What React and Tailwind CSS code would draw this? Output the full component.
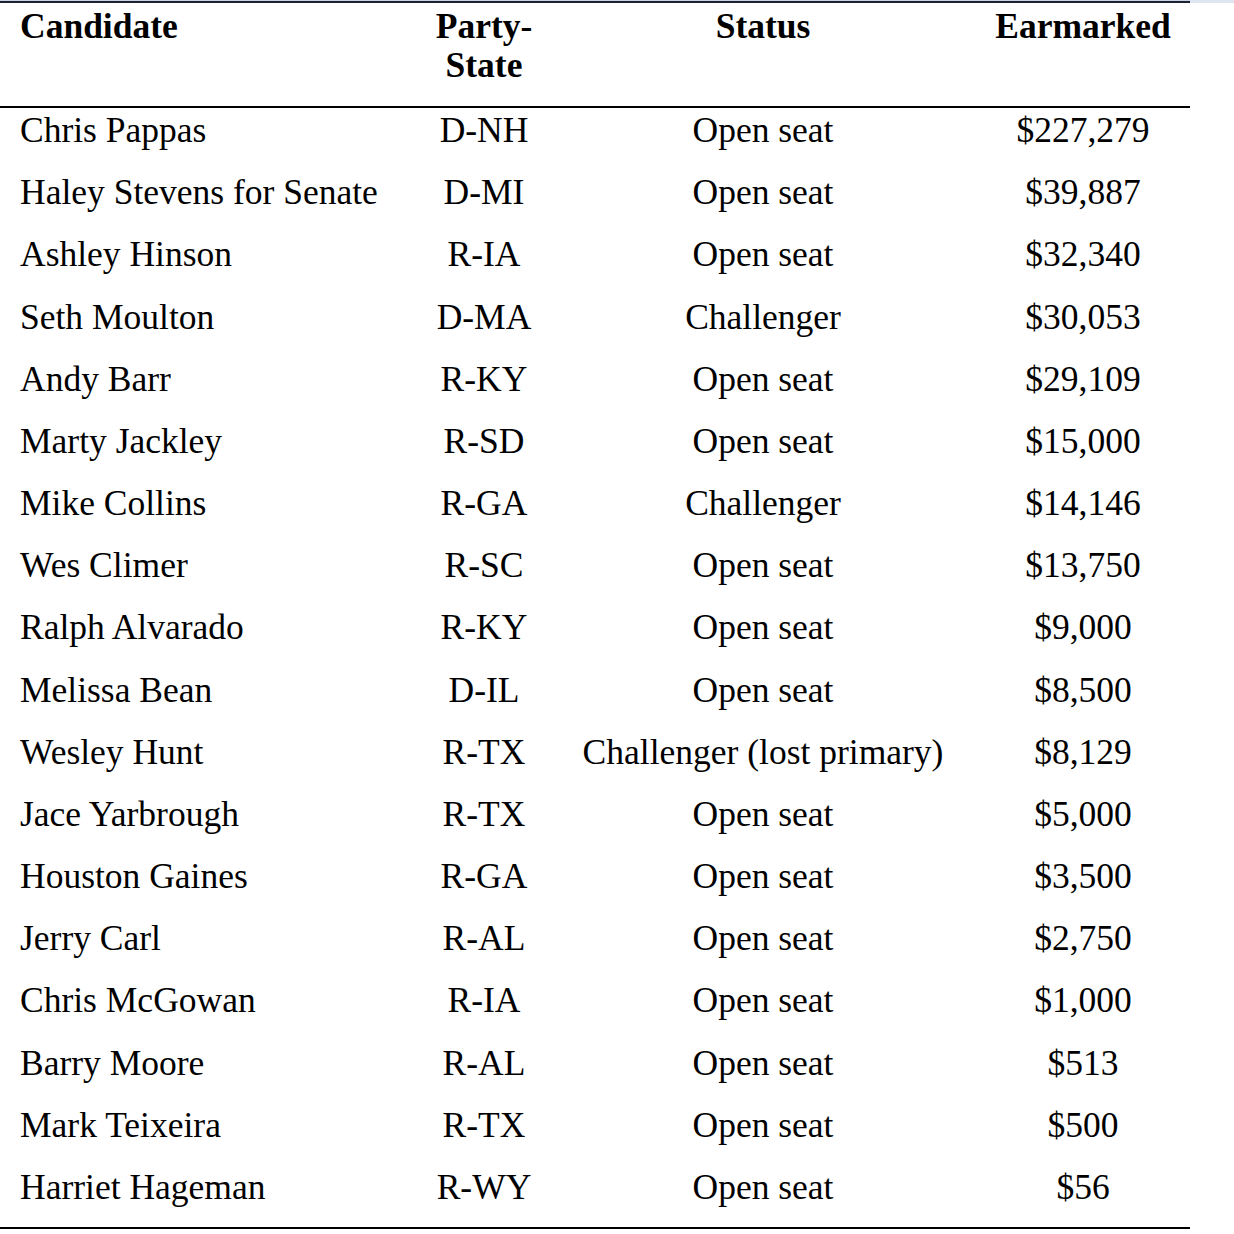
const rows = [
  ["Chris Pappas", "D-NH", "Open seat", "$227,279"],
  ["Haley Stevens for Senate", "D-MI", "Open seat", "$39,887"],
  ["Ashley Hinson", "R-IA", "Open seat", "$32,340"],
  ["Seth Moulton", "D-MA", "Challenger", "$30,053"],
  ["Andy Barr", "R-KY", "Open seat", "$29,109"],
  ["Marty Jackley", "R-SD", "Open seat", "$15,000"],
  ["Mike Collins", "R-GA", "Challenger", "$14,146"],
  ["Wes Climer", "R-SC", "Open seat", "$13,750"],
  ["Ralph Alvarado", "R-KY", "Open seat", "$9,000"],
  ["Melissa Bean", "D-IL", "Open seat", "$8,500"],
  ["Wesley Hunt", "R-TX", "Challenger (lost primary)", "$8,129"],
  ["Jace Yarbrough", "R-TX", "Open seat", "$5,000"],
  ["Houston Gaines", "R-GA", "Open seat", "$3,500"],
  ["Jerry Carl", "R-AL", "Open seat", "$2,750"],
  ["Chris McGowan", "R-IA", "Open seat", "$1,000"],
  ["Barry Moore", "R-AL", "Open seat", "$513"],
  ["Mark Teixeira", "R-TX", "Open seat", "$500"],
  ["Harriet Hageman", "R-WY", "Open seat", "$56"],
];

export default function App() {
  return (
    <div
      className="w-[1234px] h-[1234px] bg-white text-black overflow-hidden"
      style={{ fontFamily: '"Liberation Serif", "Times New Roman", serif' }}
    >
      <div className="flex h-[3px]">
        <div className="w-[1190px] flex flex-col">
          <div className="h-[1px] bg-[#c9d1e4]"></div>
          <div className="h-[2px] bg-[#1c2233]"></div>
        </div>
        <div className="flex-1 bg-[#dfe4f1]"></div>
      </div>
      <div className="w-[1190px]">
        <div className="grid grid-cols-[420px_128px_430px_212px] pt-[4px] pb-[21px] text-[35.5px] leading-[39px] font-bold">
          <div className="pl-[20px] whitespace-nowrap">Candidate</div>
          <div className="text-center">
            Party-
            <br />
            State
          </div>
          <div className="text-center">Status</div>
          <div className="text-center pr-[2px]">Earmarked</div>
        </div>
        <div className="h-[2px] bg-black"></div>
        <div className="text-[35.5px] leading-[44px]">
          {rows.map((r, i) => (
            <div
              key={i}
              className="grid grid-cols-[420px_128px_430px_212px] h-[62.18px] whitespace-nowrap"
            >
              <div className="pl-[20px]">{r[0]}</div>
              <div className="text-center">{r[1]}</div>
              <div className="text-center">{r[2]}</div>
              <div className="text-center pr-[2px]">{r[3]}</div>
            </div>
          ))}
        </div>
        <div className="h-[2px] bg-black"></div>
      </div>
    </div>
  );
}
